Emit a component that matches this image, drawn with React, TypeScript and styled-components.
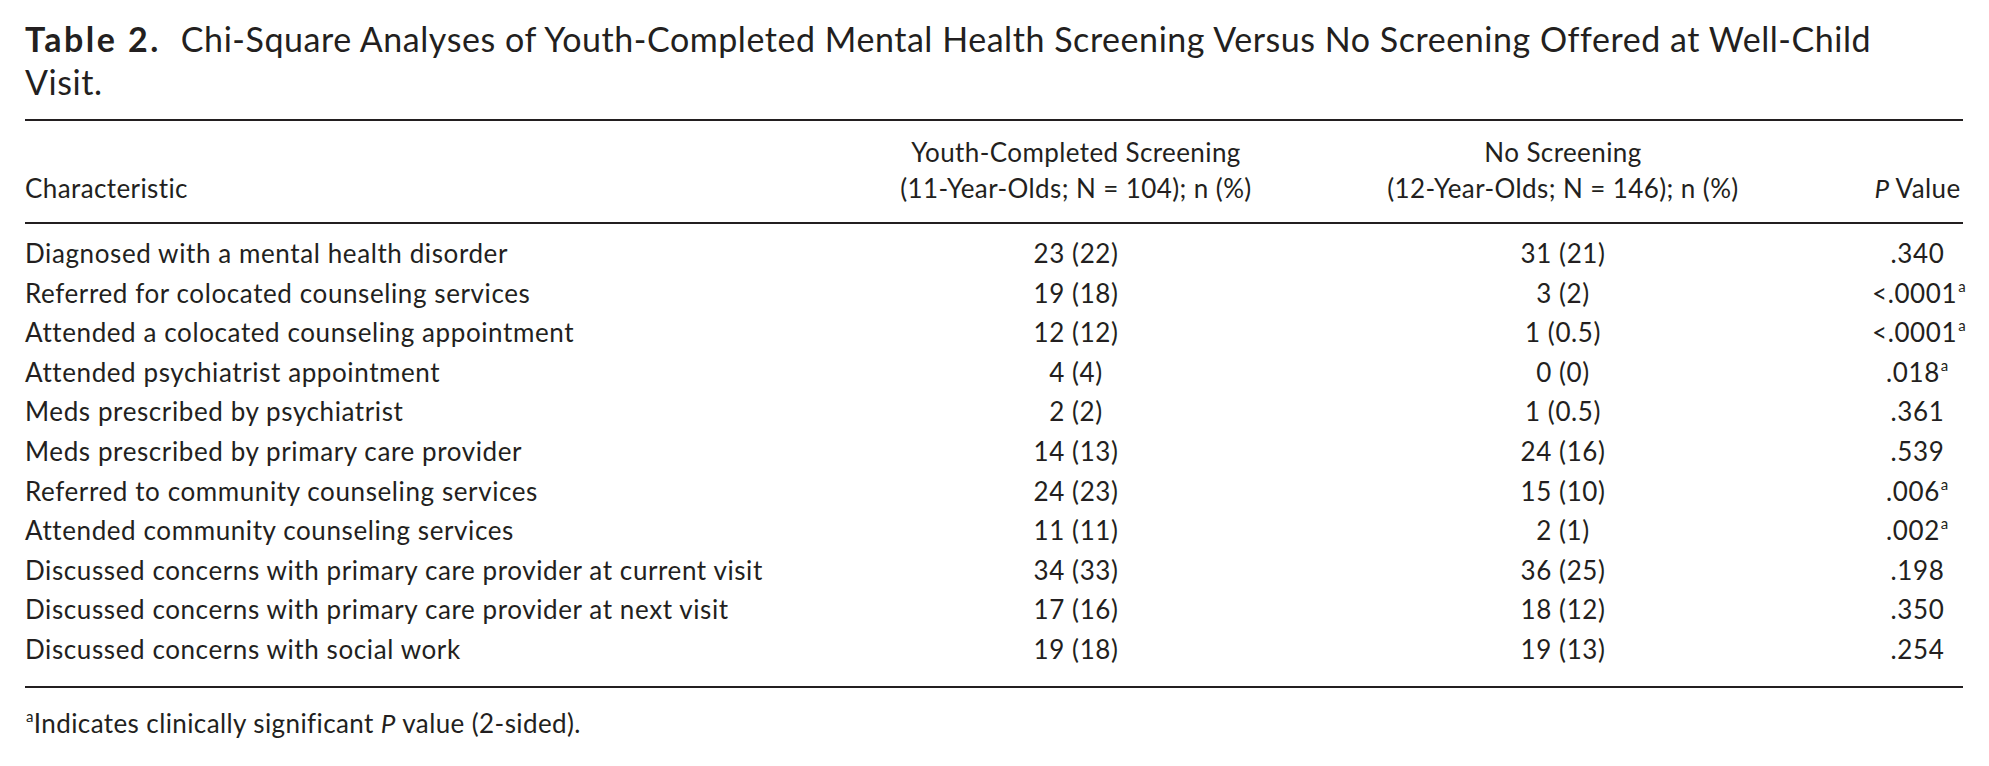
import React from 'react';
import styled, { createGlobalStyle } from 'styled-components';

const GlobalStyle = createGlobalStyle`
    body {
        margin: 0;
        background: #ffffff;
        font-family: Lato, "Open Sans", sans-serif;
        color: #231f20;
    }
`;

const Page = styled.div`
    width: 1989px;
    padding: 17px 26px 0 25px;
    box-sizing: border-box;
`;

const Caption = styled.div`
    font-size: 34px;
    line-height: 43px;
    letter-spacing: 0.55px;
    white-space: nowrap;
`;

const Label = styled.span`
    font-weight: 700;
    letter-spacing: 2.5px;
    margin-right: 20px;
`;

const Table = styled.div`
    margin-top: 16px;
    border-top: 2px solid #231f20;
    border-bottom: 2px solid #231f20;
    font-size: 26px;
    letter-spacing: 0.6px;
`;

const Head = styled.div`
    display: grid;
    grid-template-columns: 851px 400px 574px 1fr;
    align-items: end;
    padding: 13px 0 16px;
    line-height: 36px;
    letter-spacing: 0.4px;
    border-bottom: 2px solid #231f20;
`;

const Body = styled.div`
    padding: 10px 0 16px;
`;

const Row = styled.div`
    display: grid;
    grid-template-columns: 851px 400px 574px 1fr;
    line-height: 39.6px;
    height: 39.6px;
`;

const Cell = styled.div<{ $align?: 'left' | 'center'; $last?: boolean }>`
    text-align: ${(p) => p.$align || 'center'};
    padding-left: ${(p) => (p.$last ? '22px' : '0')};
    white-space: nowrap;
`;

const Sup = styled.sup`
    font-size: 15px;
    line-height: 0;
    vertical-align: 11px;
    margin-left: 1px;
`;

const Footnote = styled.div`
    margin-top: 17px;
    font-size: 26px;
    letter-spacing: 0.4px;
    line-height: 36px;
`;

type Entry = {
    name: string;
    youth: string;
    none: string;
    p: string;
    sig?: boolean;
};

const rows: Entry[] = [
    { name: 'Diagnosed with a mental health disorder', youth: '23 (22)', none: '31 (21)', p: '.340' },
    { name: 'Referred for colocated counseling services', youth: '19 (18)', none: '3 (2)', p: '<.0001', sig: true },
    { name: 'Attended a colocated counseling appointment', youth: '12 (12)', none: '1 (0.5)', p: '<.0001', sig: true },
    { name: 'Attended psychiatrist appointment', youth: '4 (4)', none: '0 (0)', p: '.018', sig: true },
    { name: 'Meds prescribed by psychiatrist', youth: '2 (2)', none: '1 (0.5)', p: '.361' },
    { name: 'Meds prescribed by primary care provider', youth: '14 (13)', none: '24 (16)', p: '.539' },
    { name: 'Referred to community counseling services', youth: '24 (23)', none: '15 (10)', p: '.006', sig: true },
    { name: 'Attended community counseling services', youth: '11 (11)', none: '2 (1)', p: '.002', sig: true },
    { name: 'Discussed concerns with primary care provider at current visit', youth: '34 (33)', none: '36 (25)', p: '.198' },
    { name: 'Discussed concerns with primary care provider at next visit', youth: '17 (16)', none: '18 (12)', p: '.350' },
    { name: 'Discussed concerns with social work', youth: '19 (18)', none: '19 (13)', p: '.254' },
];

const App: React.FC = () => {
    return (
        <Page>
            <GlobalStyle />
            <Caption>
                <div>
                    <Label>Table 2.</Label>
                    <span>Chi-Square Analyses of Youth-Completed Mental Health Screening Versus No Screening Offered at Well-Child</span>
                </div>
                <div>Visit.</div>
            </Caption>
            <Table>
                <Head>
                    <Cell $align="left">Characteristic</Cell>
                    <Cell>
                        Youth-Completed Screening
                        <br />
                        (11-Year-Olds; N = 104); n (%)
                    </Cell>
                    <Cell>
                        No Screening
                        <br />
                        (12-Year-Olds; N = 146); n (%)
                    </Cell>
                    <Cell $last>
                        <i>P</i> Value
                    </Cell>
                </Head>
                <Body>
                    {rows.map((r) => (
                        <Row key={r.name}>
                            <Cell $align="left">{r.name}</Cell>
                            <Cell>{r.youth}</Cell>
                            <Cell>{r.none}</Cell>
                            <Cell $last>
                                {r.p}
                                {r.sig && <Sup>a</Sup>}
                            </Cell>
                        </Row>
                    ))}
                </Body>
            </Table>
            <Footnote>
                <Sup>a</Sup>Indicates clinically significant <i>P</i> value (2-sided).
            </Footnote>
        </Page>
    );
};

export default App;
